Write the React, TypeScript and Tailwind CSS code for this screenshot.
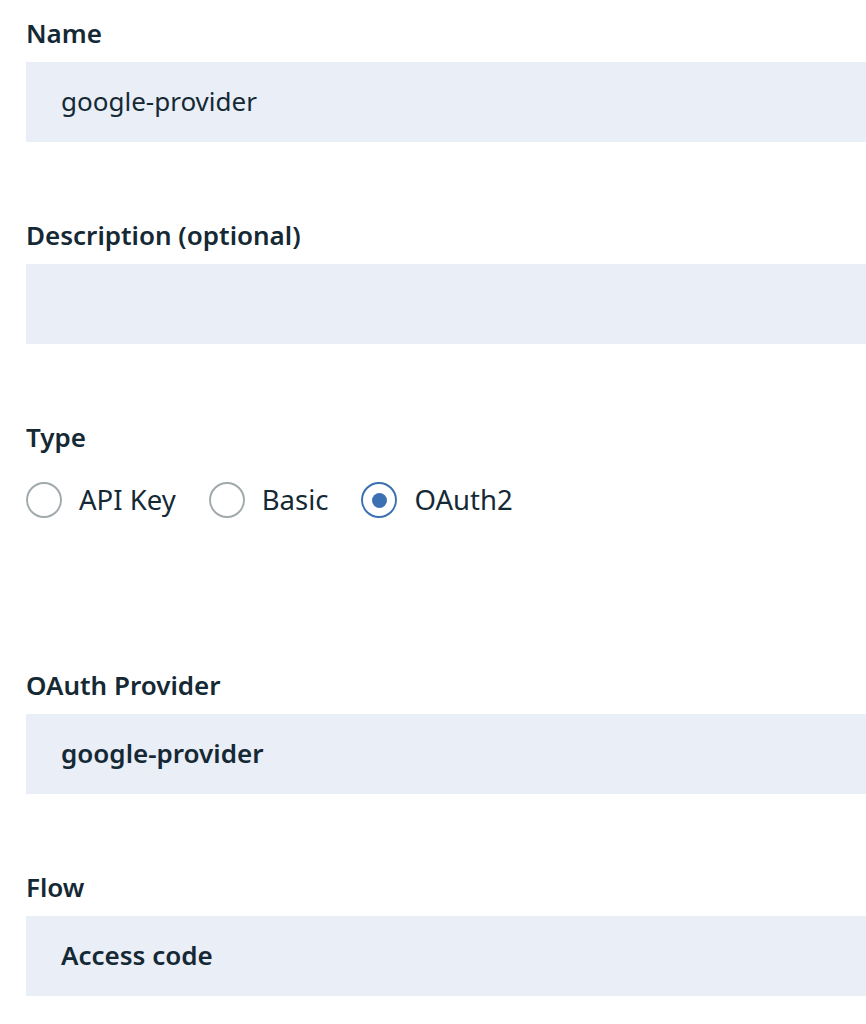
import React from 'react';

const font = { fontFamily: '"Noto Sans", "Open Sans", sans-serif' };

function Label({ children }: { children: React.ReactNode }) {
  return <div className="text-[26px] leading-[34px] font-semibold text-[#152935] mb-3">{children}</div>;
}

function Field({ value, bold }: { value?: string; bold?: boolean }) {
  return (
    <div className={`h-[80px] bg-[#e9eef7] flex items-center pl-[35px] text-[26px] leading-[34px] text-[#152935] ${bold ? 'font-semibold' : 'font-normal'}`}>
      <span className="-mt-[2px]">{value}</span>
    </div>
  );
}

function Radio({ label, checked }: { label: string; checked?: boolean }) {
  return (
    <div className="flex items-center gap-[17px] h-[36px]">
      <span className={`w-[36px] h-[36px] rounded-full border-2 flex items-center justify-center ${checked ? 'border-[#3d70b2]' : 'border-[#a2a9ad]'}`}>
        {checked && <span className="w-[15px] h-[15px] rounded-full bg-[#3d70b2]" />}
      </span>
      <span className="text-[27.5px] leading-[36px] text-[#152935]">{label}</span>
    </div>
  );
}

export default function App() {
  return (
    <div className="min-h-screen bg-white pl-[26px] pt-4" style={font}>
      <Label>Name</Label>
      <Field value="google-provider" />

      <div className="mt-[76px]">
        <Label>Description (optional)</Label>
        <Field />
      </div>

      <div className="mt-[76px]">
        <div className="text-[26px] leading-[34px] font-semibold text-[#152935]">Type</div>
        <div className="flex items-center gap-[33px] mt-[28px]">
          <Radio label="API Key" />
          <Radio label="Basic" />
          <Radio label="OAuth2" checked />
        </div>
      </div>

      <div className="mt-[150px]">
        <Label>OAuth Provider</Label>
        <Field value="google-provider" bold />
      </div>

      <div className="mt-[76px]">
        <Label>Flow</Label>
        <Field value="Access code" bold />
      </div>
    </div>
  );
}
